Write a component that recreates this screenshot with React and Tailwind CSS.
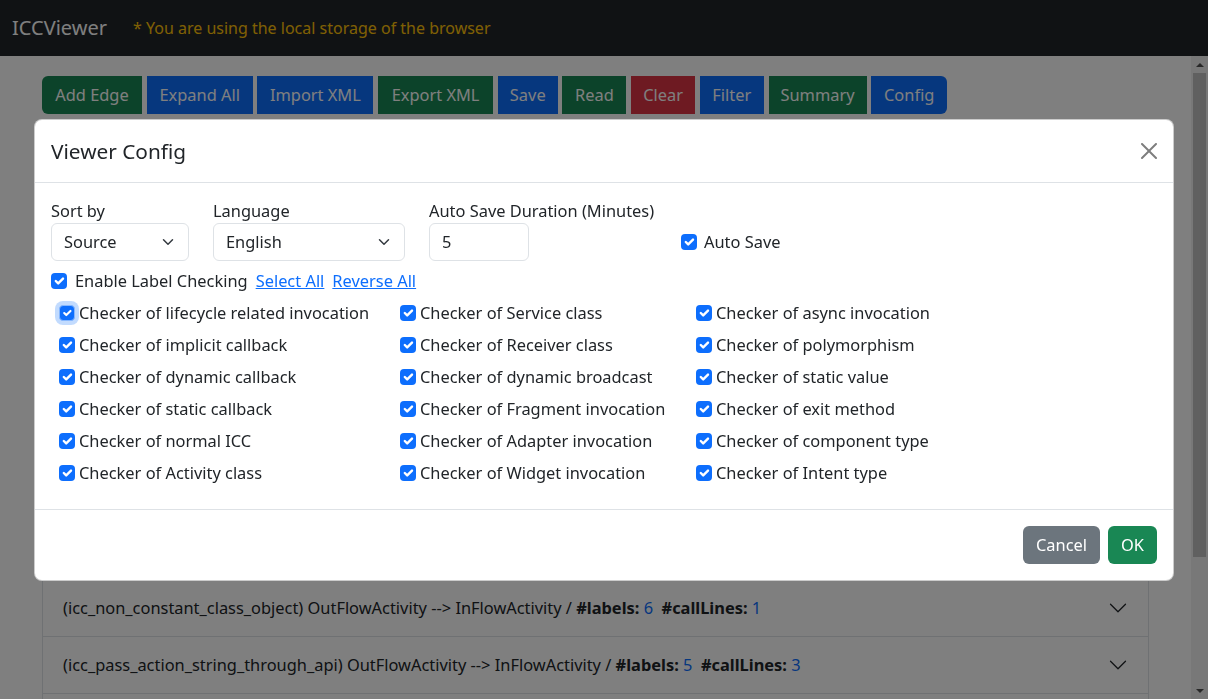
import React from 'react';

const buttons = [
  { label: 'Add Edge', color: 'bg-[#198754]', w: 'w-[100px]' },
  { label: 'Expand All', color: 'bg-[#0d6efd]', w: 'w-[106px]' },
  { label: 'Import XML', color: 'bg-[#0d6efd]', w: 'w-[116px]' },
  { label: 'Export XML', color: 'bg-[#198754]', w: 'w-[115px]' },
  { label: 'Save', color: 'bg-[#0d6efd]', w: 'w-[60px]' },
  { label: 'Read', color: 'bg-[#198754]', w: 'w-[64px]' },
  { label: 'Clear', color: 'bg-[#dc3545]', w: 'w-[64px]' },
  { label: 'Filter', color: 'bg-[#0d6efd]', w: 'w-[64px]' },
  { label: 'Summary', color: 'bg-[#198754]', w: 'w-[98px]' },
  { label: 'Config', color: 'bg-[#0d6efd]', w: 'w-[76px]' },
];

const edges = [
  ['icc_action_string_operations', 'OutFlowActivity', 'InFlowActivity', 4, 2],
  ['icc_class_constant', 'OutFlowActivity', 'InFlowActivity', 3, 1],
  ['icc_component_name', 'OutFlowActivity', 'InFlowActivity', 5, 2],
  ['icc_dynregister_receiver', 'OutFlowActivity', 'InFlowReceiver', 6, 3],
  ['icc_explicit_src_sink', 'OutFlowActivity', 'InFlowActivity', 2, 1],
  ['icc_implicit_action', 'OutFlowActivity', 'InFlowActivity', 4, 1],
  ['icc_implicit_category', 'OutFlowActivity', 'InFlowActivity', 4, 2],
  ['icc_implicit_mix', 'OutFlowActivity', 'InFlowActivity', 5, 1],
  ['icc_non_constant_class_object', 'OutFlowActivity', 'InFlowActivity', 6, 1],
  ['icc_pass_action_string_through_api', 'OutFlowActivity', 'InFlowActivity', 5, 3],
  ['icc_set_class_name', 'OutFlowActivity', 'InFlowActivity', 3, 1],
];

const columns = [
  {
    width: 'w-[341px]',
    items: [
      'Checker of lifecycle related invocation',
      'Checker of implicit callback',
      'Checker of dynamic callback',
      'Checker of static callback',
      'Checker of normal ICC',
      'Checker of Activity class',
    ],
  },
  {
    width: 'w-[296px]',
    items: [
      'Checker of Service class',
      'Checker of Receiver class',
      'Checker of dynamic broadcast',
      'Checker of Fragment invocation',
      'Checker of Adapter invocation',
      'Checker of Widget invocation',
    ],
  },
  {
    width: 'w-[300px]',
    items: [
      'Checker of async invocation',
      'Checker of polymorphism',
      'Checker of static value',
      'Checker of exit method',
      'Checker of component type',
      'Checker of Intent type',
    ],
  },
];

const Check = ({ focus }) => (
  <span
    className={
      focus
        ? 'inline-flex h-4 w-4 shrink-0 items-center justify-center rounded-[4px] border border-[#86b7fe] bg-[#0d6efd] shadow-[0_0_0_4px_rgba(13,110,253,0.25)]'
        : 'inline-flex h-4 w-4 shrink-0 items-center justify-center rounded-[4px] bg-[#0d6efd]'
    }
  >
    <svg viewBox="0 0 20 20" className="h-4 w-4">
      <path d="m6 10 3 3 6-6" fill="none" stroke="#fff" strokeWidth="3" strokeLinecap="round" strokeLinejoin="round" />
    </svg>
  </span>
);

const Chevron = ({ className, stroke }) => (
  <svg viewBox="0 0 16 16" className={className}>
    <path d="M2 5 8 11 14 5" fill="none" stroke={stroke} strokeLinecap="round" strokeLinejoin="round" />
  </svg>
);

const Select = ({ value, width }) => (
  <div className={`flex h-[38px] items-center justify-between rounded-md border border-[#dee2e6] px-3 ${width}`}>
    <span>{value}</span>
    <svg viewBox="0 0 16 16" className="h-3 w-4">
      <path d="m2 5 6 6 6-6" fill="none" stroke="#343a40" strokeWidth="2" strokeLinecap="round" strokeLinejoin="round" />
    </svg>
  </div>
);

const EdgeItem = ({ edge }) => {
  const [name, from, to, labels, lines] = edge;
  return (
    <div className="flex h-[57px] items-center justify-between border-b border-[#dee2e6] pl-5 pr-5">
      <span className="whitespace-nowrap">
        ({name}) {from} --&gt; {to} / <b>#labels:</b> <span className="text-[#0d6efd]">{labels}</span>&nbsp; <b>#callLines:</b>{' '}
        <span className="text-[#0d6efd]">{lines}</span>
      </span>
      <Chevron className="h-5 w-5 shrink-0" stroke="#212529" />
    </div>
  );
};

// page scrollbar of the content area (classic style with arrow buttons)
const ScrollBar = () => (
  <div className="flex w-[17px] shrink-0 flex-col bg-[#f1f1f1]">
    <div className="flex h-[17px] items-center justify-center">
      <svg viewBox="0 0 8 4" className="h-1 w-2">
        <path d="M0 4 4 0 8 4z" fill="#505050" />
      </svg>
    </div>
    <div className="flex-1 px-[2px]">
      <div className="h-[484px] bg-[#c1c1c1]" />
    </div>
    <div className="flex h-[17px] items-center justify-center">
      <svg viewBox="0 0 8 4" className="h-1 w-2">
        <path d="M0 0 8 0 4 4z" fill="#505050" />
      </svg>
    </div>
  </div>
);

export default function App() {
  return (
    <div className="relative flex h-screen flex-col overflow-hidden bg-white font-['Noto_Sans','Open_Sans',sans-serif] text-[16.4px] leading-6 text-[#212529]">
      <nav className="flex h-14 shrink-0 items-center bg-[#212529] px-3">
        <span className="text-xl leading-[30px] text-white">ICCViewer</span>
        <span className="ml-[26px] text-base text-[#ffc107]">* You are using the local storage of the browser</span>
      </nav>

      <div className="flex min-h-0 flex-1">
        <div className="flex-1 overflow-hidden px-[42px] pt-5">
          <div className="flex gap-[4.7px]">
            {buttons.map((b, i) => (
              <button
                key={b.label}
                className={`h-[38px] text-white ${b.w} ${b.color} ${i === 0 ? 'rounded-l-md' : ''} ${i === buttons.length - 1 ? 'rounded-r-md' : ''}`}
              >
                {b.label}
              </button>
            ))}
          </div>
          <div className="mt-[9px] border-x border-t border-[#dee2e6]">
            {edges.map((e) => (
              <EdgeItem key={e[0]} edge={e} />
            ))}
          </div>
        </div>
        <ScrollBar />
      </div>

      {/* modal backdrop + dialog */}
      <div className="fixed inset-0 bg-black/50" />
      <div className="fixed inset-0 flex items-center justify-center">
        <div className="w-[1140px] rounded-lg border border-black/20 bg-white">
          <div className="flex items-center justify-between border-b border-[#dee2e6] p-4">
            <h5 className="text-[20.8px] font-normal leading-[30px]">Viewer Config</h5>
            <svg viewBox="0 0 16 16" className="h-4 w-4 opacity-50">
              <path d="M.293.293a1 1 0 0 1 1.414 0L8 6.586 14.293.293a1 1 0 1 1 1.414 1.414L9.414 8l6.293 6.293a1 1 0 0 1-1.414 1.414L8 9.414l-6.293 6.293a1 1 0 0 1-1.414-1.414L6.586 8 .293 1.707a1 1 0 0 1 0-1.414z" />
            </svg>
          </div>

          <div className="p-4">
            <div className="flex gap-6">
              <div>
                <label className="block">Sort by</label>
                <Select value="Source" width="w-[138px]" />
              </div>
              <div>
                <label className="block">Language</label>
                <Select value="English" width="w-[192px]" />
              </div>
              <div className="w-[228px]">
                <label className="block whitespace-nowrap">Auto Save Duration (Minutes)</label>
                <div className="flex h-[38px] w-[100px] items-center rounded-md border border-[#dee2e6] px-3">5</div>
              </div>
              <div className="flex items-end">
                <div className="flex h-[38px] items-center gap-[7px]">
                  <Check />
                  <span>Auto Save</span>
                </div>
              </div>
            </div>

            <div className="mt-2 flex h-6 items-center">
              <Check />
              <span className="ml-2">Enable Label Checking</span>
              <a className="ml-2 text-[#0d6efd] underline">Select All</a>
              <a className="ml-2 text-[#0d6efd] underline">Reverse All</a>
            </div>

            <div className="mt-2 flex pb-2 pl-2">
              {columns.map((col, ci) => (
                <div key={ci} className={`flex flex-col gap-2 ${col.width}`}>
                  {col.items.map((item, ri) => (
                    <div key={item} className="flex h-6 items-center gap-1">
                      <Check focus={ci === 0 && ri === 0} />
                      <span className="whitespace-nowrap">{item}</span>
                    </div>
                  ))}
                </div>
              ))}
            </div>
          </div>

          <div className="flex justify-end gap-2 border-t border-[#dee2e6] px-4 py-4">
            <button className="h-[38px] w-[77px] rounded-md bg-[#6c757d] text-white">Cancel</button>
            <button className="h-[38px] w-[49px] rounded-md bg-[#198754] text-white">OK</button>
          </div>
        </div>
      </div>
    </div>
  );
}
